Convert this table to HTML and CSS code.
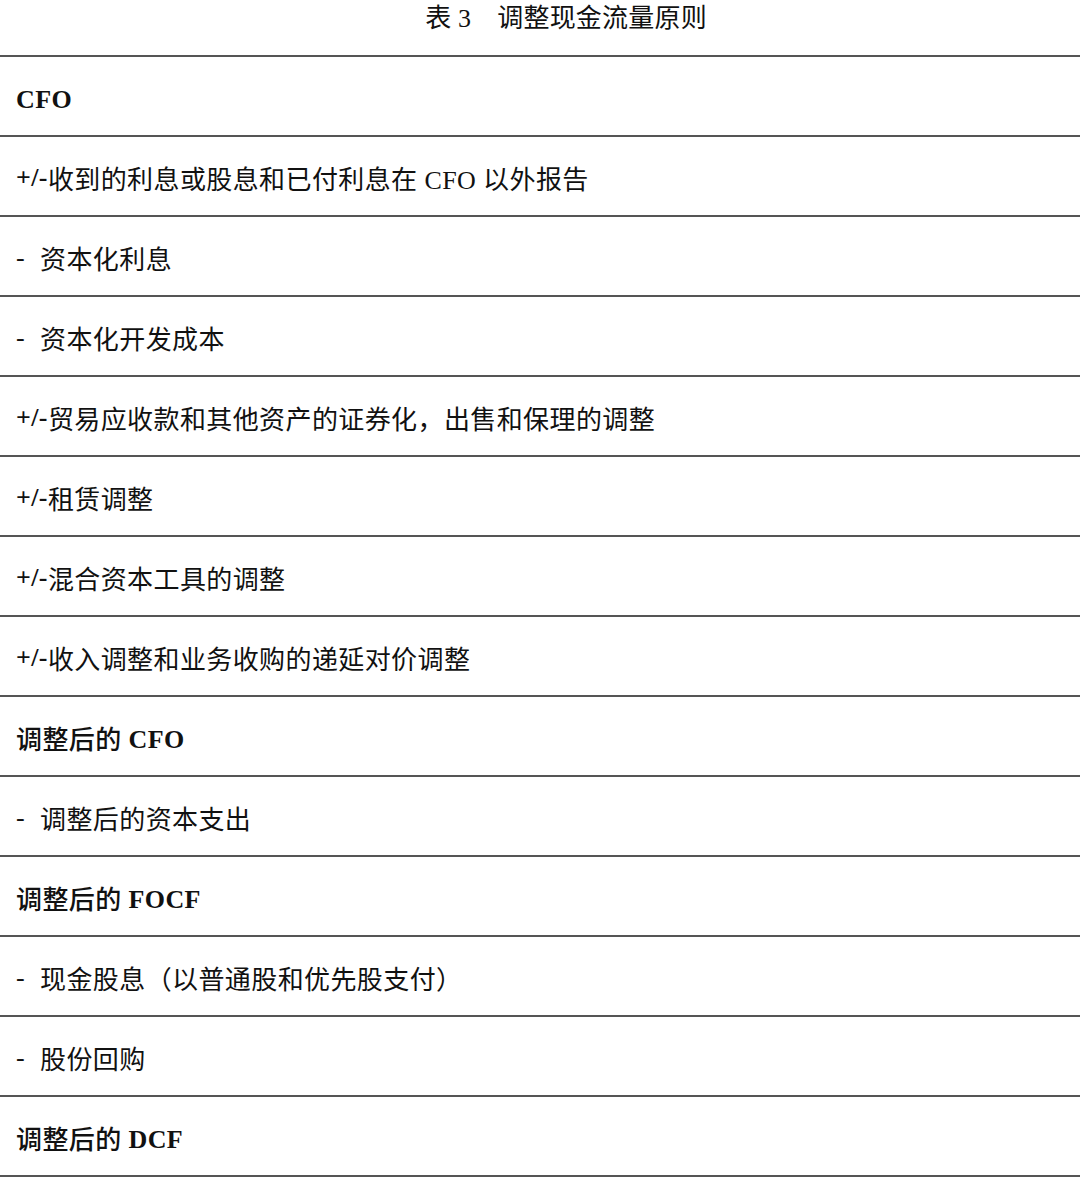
FILE: index.html
```html
<!DOCTYPE html>
<html lang="zh-CN">
<head>
<meta charset="utf-8">
<title>表 3 调整现金流量原则</title>
<link rel="stylesheet" href="styles.css">
</head>
<body>
<div class="table">
  <div class="title">表 3<span class="gap"></span>调整现金流量原则</div>
  <div class="row bold"><span class="lat">CFO</span></div>
  <div class="row"><span class="pm">+/-</span>收到的利息或股息和已付利息在 CFO 以外报告</div>
  <div class="row"><span class="dash">-</span>资本化利息</div>
  <div class="row"><span class="dash">-</span>资本化开发成本</div>
  <div class="row"><span class="pm">+/-</span>贸易应收款和其他资产的证券化，出售和保理的调整</div>
  <div class="row"><span class="pm">+/-</span>租赁调整</div>
  <div class="row"><span class="pm">+/-</span>混合资本工具的调整</div>
  <div class="row"><span class="pm">+/-</span>收入调整和业务收购的递延对价调整</div>
  <div class="row bold">调整后的 <span class="lat">CFO</span></div>
  <div class="row"><span class="dash">-</span>调整后的资本支出</div>
  <div class="row bold">调整后的 <span class="lat">FOCF</span></div>
  <div class="row"><span class="dash">-</span>现金股息（以普通股和优先股支付）</div>
  <div class="row"><span class="dash">-</span>股份回购</div>
  <div class="row bold">调整后的 <span class="lat">DCF</span></div>
</div>
</body>
</html>
```
FILE: styles.css
```css
html, body {
  margin: 0;
  padding: 0;
  background: #ffffff;
}

body {
  font-family: "Liberation Serif", "Noto Sans CJK SC", serif;
  color: #111111;
  font-size: 26px;
}

.table {
  width: 1080px;
}

.title {
  height: 57px;
  line-height: 38px;
  text-align: center;
  padding-left: 52px;
  box-sizing: border-box;
  border-bottom: 2px solid #555555;
  letter-spacing: 0.2px;
}

.gap {
  display: inline-block;
  width: 26px;
}

.row {
  height: 80px;
  box-sizing: border-box;
  border-bottom: 2px solid #555555;
  display: flex;
  align-items: center;
  padding: 3px 0 0 16px;
  letter-spacing: 0.4px;
  white-space: pre;
}

.pm {
  font-weight: 700;
}

.bold {
  font-weight: 500;
}

.bold .lat {
  font-weight: 700;
  position: relative;
  top: 2px;
}

.dash {
  padding-right: 15px;
}
```
